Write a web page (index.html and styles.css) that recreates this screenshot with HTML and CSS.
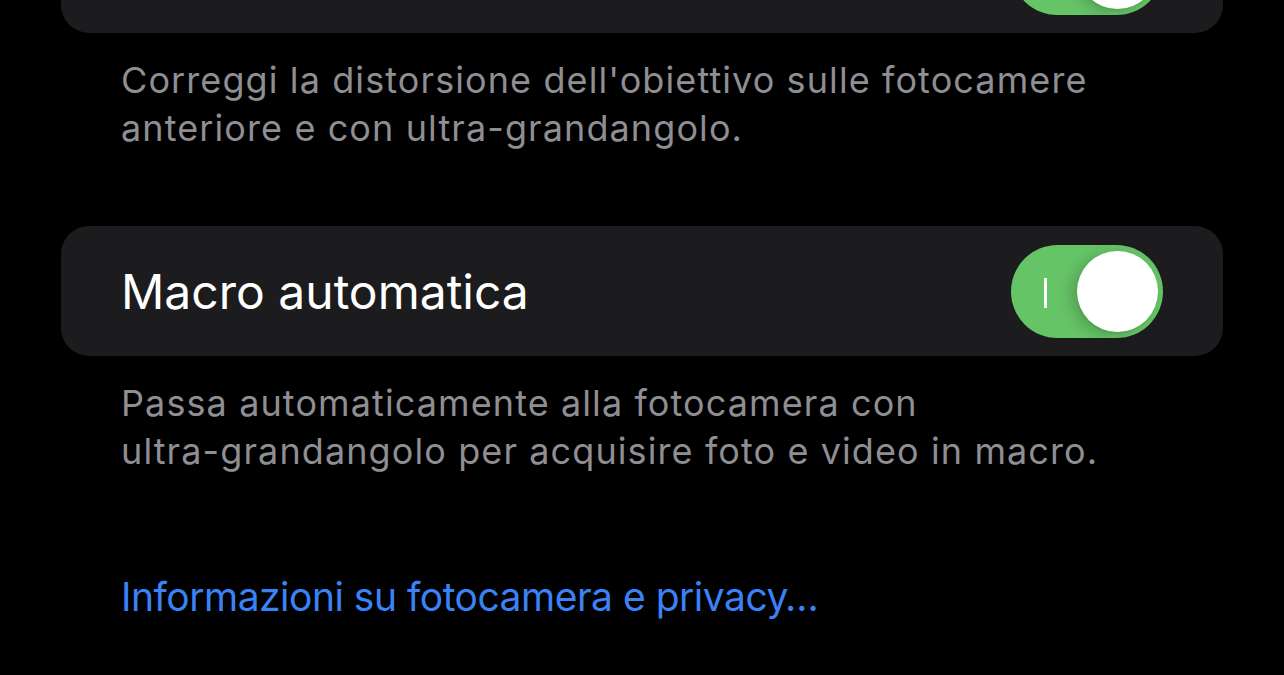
FILE: index.html
```html
<!DOCTYPE html>
<html lang="it">
<head>
<meta charset="utf-8">
<link rel="stylesheet" href="styles.css">
</head>
<body>
<div class="page">
  <div class="card card-first">
    <span class="title">Correzione obiettivo</span>
    <div class="toggle"><span class="bar"></span><span class="knob"></span></div>
  </div>
  <p class="footnote">Correggi la distorsione dell'obiettivo sulle fotocamere<br>anteriore e con ultra-grandangolo.</p>
  <div class="card card-second">
    <span class="title">Macro automatica</span>
    <div class="toggle"><span class="bar"></span><span class="knob"></span></div>
  </div>
  <p class="footnote">Passa automaticamente alla fotocamera con<br>ultra-grandangolo per acquisire foto e video in macro.</p>
  <a class="link" href="#">Informazioni su fotocamera e privacy…</a>
</div>
</body>
</html>
```
FILE: styles.css
```css
html, body {
  margin: 0;
  padding: 0;
  background: #000;
  height: 100%;
  overflow: hidden;
}
body {
  font-family: Inter, "Noto Sans", "Liberation Sans", sans-serif;
  -webkit-font-smoothing: antialiased;
}
.page {
  padding: 0 61px;
  display: flex;
  flex-direction: column;
}
.card {
  height: 130px;
  border-radius: 28px;
  background: #1c1c1e;
  display: flex;
  align-items: center;
  justify-content: space-between;
  padding: 0 60px;
  box-sizing: border-box;
}
.card-first {
  margin-top: -97px;
}
.card-first .title {
  visibility: hidden;
}
.card-second {
  margin-top: 74px;
}
.title {
  color: #fff;
  font-size: 48px;
  letter-spacing: 0;
}
.toggle {
  position: relative;
  width: 152px;
  height: 93px;
  border-radius: 47px;
  background: #65c466;
  flex: none;
}
.bar {
  position: absolute;
  left: 33px;
  top: 33px;
  width: 3px;
  height: 30px;
  background: #fff;
}
.knob {
  position: absolute;
  right: 5px;
  top: 6px;
  width: 81px;
  height: 81px;
  border-radius: 50%;
  background: #fff;
  box-shadow: -6px 3px 14px rgba(0, 0, 0, 0.18), 0 2px 2px rgba(0, 0, 0, 0.06);
}
.footnote {
  margin: 0;
  padding: 23px 60px 0;
  color: #8e8e93;
  font-size: 36px;
  line-height: 48px;
  letter-spacing: 1.1px;
}
.link {
  margin-top: 98px;
  padding-left: 60px;
  color: #3a82f6;
  font-size: 39px;
  line-height: 48px;
  letter-spacing: -0.5px;
  text-decoration: none;
}
```
